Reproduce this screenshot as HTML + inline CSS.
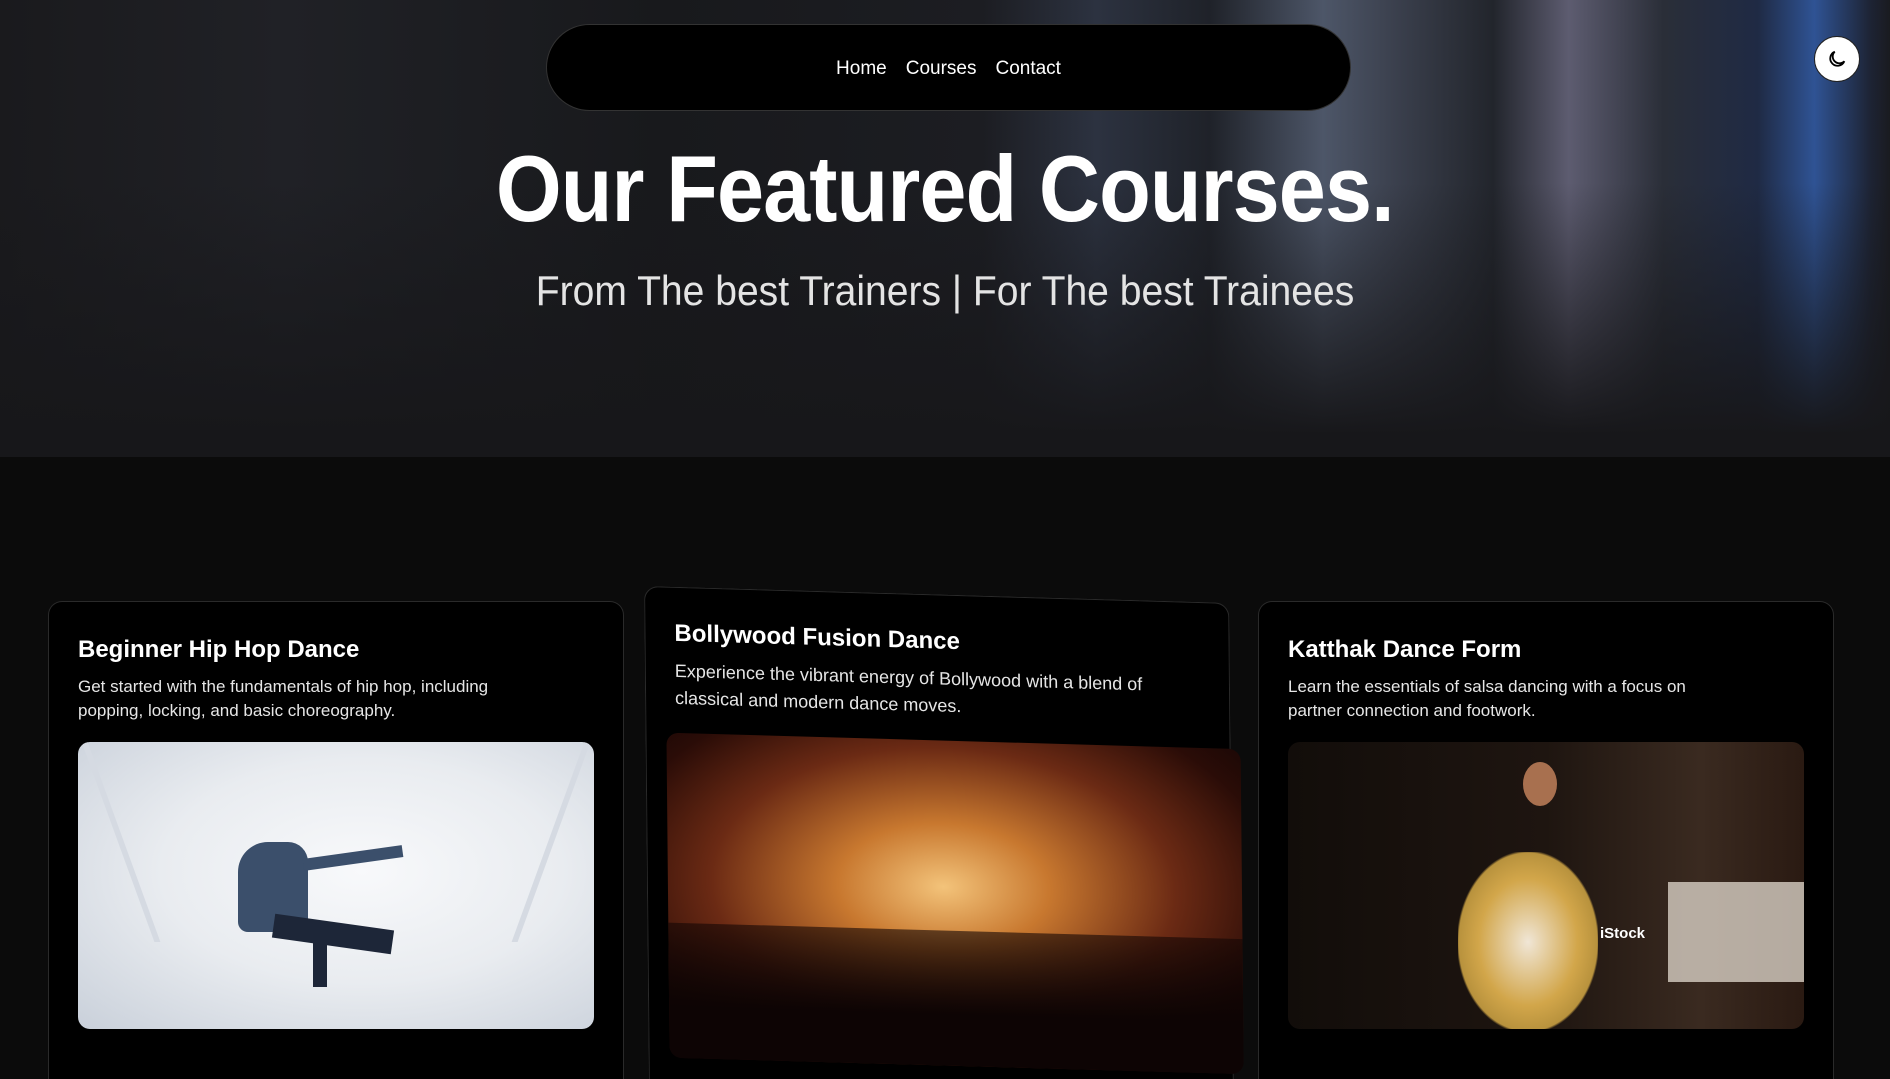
<!DOCTYPE html>
<html><head><meta charset="utf-8"><style>
*{margin:0;padding:0;box-sizing:border-box}
html,body{width:1890px;height:1079px;overflow:hidden}
body{background:#0b0b0b;font-family:"Liberation Sans",sans-serif;color:#fff}
.wrap{position:relative;width:1890px;height:1079px;overflow:hidden}
.hero{position:absolute;left:0;top:0;width:1890px;height:457px;background:
linear-gradient(180deg,rgba(22,22,25,0) 40%,#17171a 95%),
linear-gradient(90deg,#1a1a1d 0%,#202126 15%,#18191c 35%,#1c1d22 52%,#2c3240 58%,#1f2229 64%,#4d5668 70%,#3a3f4c 74%,#22252c 79%,#5d5c70 83%,#2a2e38 88%,#1f2a44 93%,#2f5394 96%,#1d2333 99%,#1a1b20 100%)}
.nav{position:absolute;left:546px;top:24px;width:805px;height:87px;background:#000;border:1px solid #333;border-radius:44px;display:flex;justify-content:center;align-items:center;gap:19px;font-size:19px;padding-top:3px}
.moon{position:absolute;left:1814px;top:36px;width:46px;height:46px;border-radius:50%;background:#fff;border:1px solid #222;display:flex;align-items:center;justify-content:center}
h1{position:absolute;left:0;width:1890px;top:135px;text-align:center;font-size:94px;font-weight:bold;white-space:nowrap}
h1 span{display:inline-block;transform:scaleX(.90);letter-spacing:-1px}
.sub{position:absolute;left:0;width:1890px;top:267px;text-align:center;font-size:42px;font-weight:300;color:#e4e4e4;white-space:nowrap}
.sub span{display:inline-block;transform:scaleX(.93)}
.card{position:absolute;background:#000;border:1px solid #2a2a2a;border-radius:14px 14px 0 0;border-bottom:none;height:478px}
.card h3{position:absolute;left:29px;top:34px;font-size:24px;font-weight:bold}
.card p{position:absolute;left:29px;top:73px;width:450px;font-size:17px;line-height:24px;color:#e6e6e6}
.img{position:absolute;border-radius:12px;overflow:hidden}
</style></head><body><div class="wrap">
<div class="hero"></div>
<div class="nav"><span>Home</span><span>Courses</span><span>Contact</span></div>
<div class="moon"><svg width="22" height="22" viewBox="0 0 24 24" fill="none" stroke="#000" stroke-width="2"><path d="M20 14.5A8 8 0 1 1 9.5 4a6.5 6.5 0 0 0 10.5 10.5z"/></svg></div>
<h1><span>Our Featured Courses.</span></h1>
<div class="sub"><span>From The best Trainers | For The best Trainees</span></div>

<div class="card" style="left:48px;top:601px;width:576px">
<h3>Beginner Hip Hop Dance</h3>
<p>Get started with the fundamentals of hip hop, including popping, locking, and basic choreography.</p>
<div class="img" style="left:29px;top:140px;width:516px;height:287px;background:radial-gradient(ellipse at 55% 45%,#f8f9fb 0%,#e9ecf0 50%,#c9d0da 100%)">
<div style="position:absolute;left:40px;top:0;width:6px;height:200px;background:#d5dae2;transform:skewX(20deg)"></div>
<div style="position:absolute;left:470px;top:0;width:6px;height:200px;background:#d5dae2;transform:skewX(-20deg)"></div>
<div style="position:absolute;left:160px;top:100px;width:70px;height:90px;background:#3b4f6b;border-radius:30px 20px 10px 10px"></div>
<div style="position:absolute;left:225px;top:110px;width:100px;height:12px;background:#3b4f6b;transform:rotate(-8deg)"></div>
<div style="position:absolute;left:195px;top:180px;width:120px;height:24px;background:#1d2638;transform:rotate(8deg)"></div>
<div style="position:absolute;left:235px;top:185px;width:14px;height:60px;background:#1d2638"></div>
</div>
</div>

<div class="card" style="left:644px;top:586px;width:585px;height:540px;transform:skewX(0.56deg) skewY(1.65deg);transform-origin:0 0">
<h3 style="top:32px">Bollywood Fusion Dance</h3>
<p style="top:70px;width:500px;font-size:18px;line-height:27px">Experience the vibrant energy of Bollywood with a blend of classical and modern dance moves.</p>
<div class="img" style="left:20px;top:145px;width:574px;height:325px;background:radial-gradient(ellipse at 48% 45%,#f3c37a 0%,#c8782f 25%,#6b2a14 55%,#2a0c07 80%,#120505 100%)">
<div style="position:absolute;left:0;top:190px;width:574px;height:140px;background:linear-gradient(180deg,rgba(20,6,4,.6),#0d0404 60%)"></div>
</div>
</div>

<div class="card" style="left:1258px;top:601px;width:576px">
<h3>Katthak Dance Form</h3>
<p>Learn the essentials of salsa dancing with a focus on partner connection and footwork.</p>
<div class="img" style="left:29px;top:140px;width:516px;height:287px;background:linear-gradient(90deg,#120d0a,#1e1510 50%,#3a2a20 80%,#2a1a12)">
<div style="position:absolute;left:380px;top:140px;width:136px;height:100px;background:#d8cfc4;opacity:.8"></div>
<div style="position:absolute;left:170px;top:110px;width:140px;height:180px;background:radial-gradient(ellipse at 50% 50%,#f0e6d6 0%,#d2a64a 50%,#b8923d 70%,transparent 72%)"></div>
<div style="position:absolute;left:235px;top:20px;width:34px;height:44px;border-radius:50%;background:#a8704f"></div>
<div style="position:absolute;left:312px;top:183px;font-size:15px;font-weight:bold">iStock</div>
</div>
</div>
</div></body></html>
